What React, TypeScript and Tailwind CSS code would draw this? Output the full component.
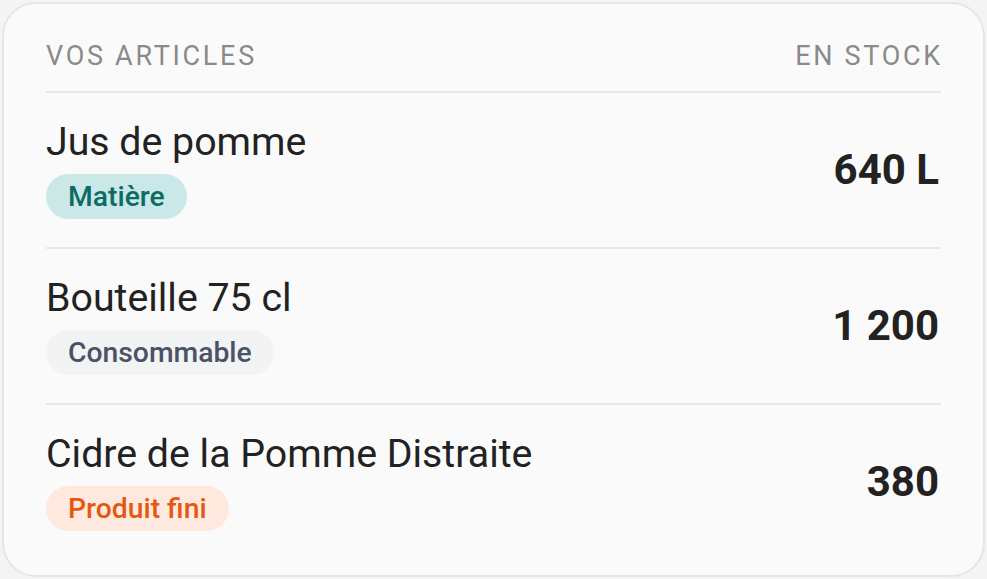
const items = [
  { name: 'Jus de pomme', tag: 'Matière', tone: 'bg-[#c9e8e7] text-[#0d6b63]', qty: '640 L' },
  { name: 'Bouteille 75 cl', tag: 'Consommable', tone: 'bg-[#f1f3f5] text-[#4a5263]', qty: '1 200' },
  { name: 'Cidre de la Pomme Distraite', tag: 'Produit fini', tone: 'bg-[#ffe9de] text-[#e25a12]', qty: '380' },
];

export default function App() {
  return (
    <div className="h-[579px] w-[987px] bg-[#f4f4f4] p-[2px] font-['Roboto',sans-serif]">
      <div className="h-full rounded-[34px] border-2 border-[#e6e6e6] bg-[#fafafa] px-[42px] pt-[36px]">
        <div className="flex justify-between border-b-2 border-[#e8e8e8] pb-[19px] text-[27px] leading-[32px] tracking-[0.1em] text-[#8a8a8a]">
          <span>VOS ARTICLES</span>
          <span className="-mr-[2px]">EN STOCK</span>
        </div>
        {items.map((it, i) => (
          <div
            key={it.name}
            className={`flex items-center justify-between pt-[26px] pb-[28px] ${i < items.length - 1 ? 'border-b-2 border-[#e8e8e8]' : ''}`}
          >
            <div className="flex flex-col items-start gap-[9px]">
              <span className="text-[39.3px] leading-[46px] text-[#222]">{it.name}</span>
              <span className={`h-[45px] rounded-full px-[22px] text-[28.3px] font-medium leading-[45px] ${it.tone}`}>
                {it.tag}
              </span>
            </div>
            <span className="pr-[2px] text-[42px] font-bold text-[#222]">{it.qty}</span>
          </div>
        ))}
      </div>
    </div>
  );
}
